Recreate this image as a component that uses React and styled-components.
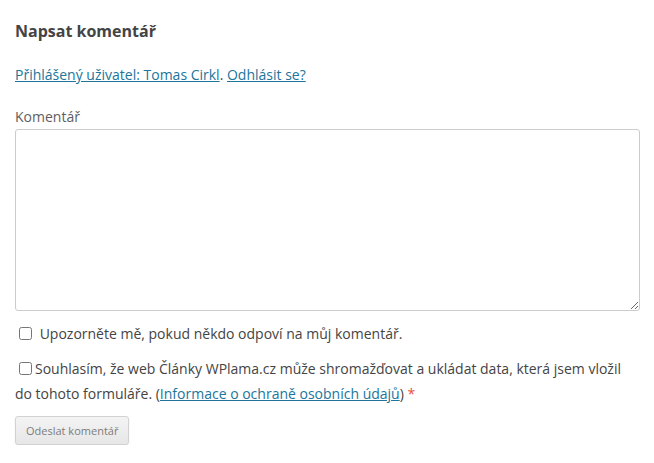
import React from "react";
import styled, { createGlobalStyle } from "styled-components";

const Global = createGlobalStyle`
  html, body { margin: 0; padding: 0; background: #fff; }
  body { font-family: "Open Sans", "Liberation Sans", sans-serif; color: #444; }
`;

const Form = styled.div`
  padding: 19px 15px 0 15px;
  width: 625px;
`;

const Title = styled.h3`
  margin: 0 0 20px;
  font-size: 16px;
  font-weight: 700;
  line-height: 24px;
  color: #444;
`;

const Para = styled.p`
  margin: 0 0 ${(p) => p.$mb || 0}px;
  font-size: 14px;
  line-height: ${(p) => p.$lh || 24}px;
  color: #444;
`;

const Link = styled.a`
  color: #21759b;
  text-decoration: underline;
`;

const Label = styled.label`
  display: block;
  font-size: 14px;
  line-height: 24px;
  color: #5e5e5e;
`;

const TextArea = styled.textarea`
  display: block;
  box-sizing: border-box;
  width: 625px;
  height: 182px;
  margin: 0;
  border: 1px solid #ccc;
  border-radius: 3px;
  font-family: inherit;
  resize: vertical;
`;

const CheckRow = styled.p`
  margin: ${(p) => p.$mt}px 0 0;
  font-size: 14px;
  line-height: ${(p) => p.$lh}px;
  color: #444;
`;

const Box = styled.input`
  margin: ${(p) => p.$m};
  vertical-align: -1px;
`;

const Star = styled.span`
  color: #e74c3c;
`;

const Button = styled.button`
  margin-top: ${(p) => p.$mt}px;
  box-sizing: border-box;
  height: 29px;
  padding: 0 10px;
  font-family: "Open Sans", "Liberation Sans", sans-serif;
  font-size: 11px;
  color: #7c7c7c;
  background: linear-gradient(to bottom, #f4f4f4, #e6e6e6);
  border: 1px solid #d2d2d2;
  border-radius: 3px;
  box-shadow: 0 1px 2px rgba(64, 64, 64, 0.1);
`;

export default function App() {
  return (
    <>
      <Global />
      <Form>
        <Title>Napsat komentář</Title>
        <Para $mb={18}>
          <Link href="#">Přihlášený uživatel: Tomas Cirkl</Link>.{" "}
          <Link href="#">Odhlásit se?</Link>
        </Para>
        <Label>Komentář</Label>
        <TextArea />
        <CheckRow $mt={11} $lh={24}>
          <Box type="checkbox" $m="0 4px 0 4px" /> Upozorněte mě, pokud někdo odpoví na můj komentář.
        </CheckRow>
        <CheckRow $mt={10} $lh={25}>
          <Box type="checkbox" $m="0 3px 0 4px" />Souhlasím, že web Články WPlama.cz může shromažďovat a ukládat data, která jsem vložil do tohoto formuláře. (<Link href="#">Informace o ochraně osobních údajů</Link>) <Star>*</Star>
        </CheckRow>
        <Button $mt={10}>Odeslat komentář</Button>
      </Form>
    </>
  );
}
